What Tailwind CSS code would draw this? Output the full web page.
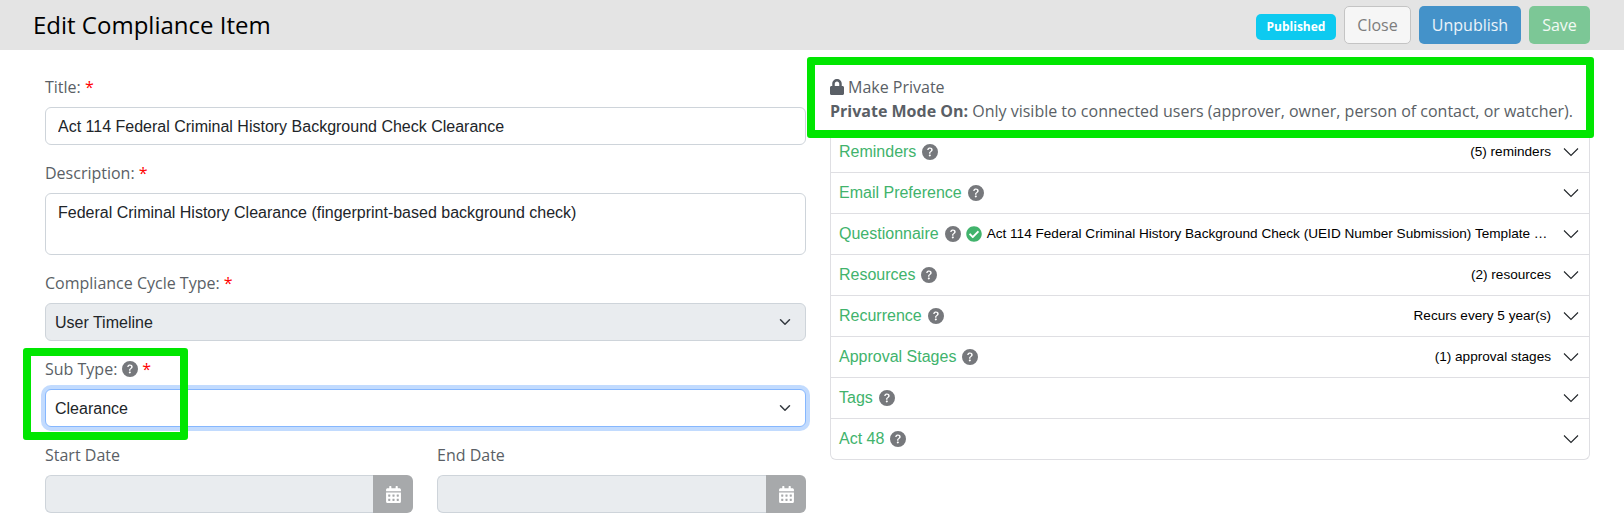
<!DOCTYPE html>
<html lang="en">
<head>
    <meta charset="UTF-8">
    <title>Edit Compliance Item</title>
    <script src="https://cdn.jsdelivr.net/npm/@tailwindcss/browser@4"></script>
</head>
<body class="relative bg-white font-['Open_Sans',sans-serif] text-[16px] text-[#5a5f66] h-[525px] overflow-hidden">
    <svg class="hidden">
        <symbol id="help" viewBox="0 0 16 16"><path fill="currentColor" d="M16 8A8 8 0 1 1 0 8a8 8 0 0 1 16 0M5.496 6.033h.825c.138 0 .248-.113.266-.25.09-.656.54-1.134 1.342-1.134.686 0 1.314.343 1.314 1.168 0 .635-.374.927-.965 1.371-.673.489-1.206 1.06-1.168 1.987l.003.217a.25.25 0 0 0 .25.246h.811a.25.25 0 0 0 .25-.25v-.105c0-.718.273-.927 1.01-1.486.609-.463 1.244-.977 1.244-2.056 0-1.511-1.276-2.241-2.673-2.241-1.267 0-2.655.59-2.75 2.286a.237.237 0 0 0 .241.247m2.325 6.443c.61 0 1.029-.394 1.029-.927 0-.552-.42-.94-1.029-.94-.584 0-1.009.388-1.009.94 0 .533.425.927 1.01.927z"/></symbol>
        <symbol id="calendar" viewBox="0 0 448 512"><path fill="currentColor" d="M0 464c0 26.5 21.5 48 48 48h352c26.5 0 48-21.5 48-48V192H0v272zm320-196c0-6.6 5.4-12 12-12h40c6.6 0 12 5.4 12 12v40c0 6.6-5.4 12-12 12h-40c-6.6 0-12-5.4-12-12v-40zm0 128c0-6.6 5.4-12 12-12h40c6.6 0 12 5.4 12 12v40c0 6.6-5.4 12-12 12h-40c-6.6 0-12-5.4-12-12v-40zM192 268c0-6.6 5.4-12 12-12h40c6.6 0 12 5.4 12 12v40c0 6.6-5.4 12-12 12h-40c-6.6 0-12-5.4-12-12v-40zm0 128c0-6.6 5.4-12 12-12h40c6.6 0 12 5.4 12 12v40c0 6.6-5.4 12-12 12h-40c-6.6 0-12-5.4-12-12v-40zM64 268c0-6.6 5.4-12 12-12h40c6.6 0 12 5.4 12 12v40c0 6.6-5.4 12-12 12H76c-6.6 0-12-5.4-12-12v-40zm0 128c0-6.6 5.4-12 12-12h40c6.6 0 12 5.4 12 12v40c0 6.6-5.4 12-12 12H76c-6.6 0-12-5.4-12-12v-40zM400 64h-48V16c0-8.8-7.2-16-16-16h-32c-8.8 0-16 7.2-16 16v48H160V16c0-8.8-7.2-16-16-16h-32c-8.8 0-16 7.2-16 16v48H48C21.5 64 0 85.5 0 112v48h448v-48c0-26.5-21.5-48-48-48z"/></symbol>
        <symbol id="chevron" viewBox="0 0 16 16"><path fill="none" stroke="currentColor" stroke-width="1.1" d="M1 4.5l7 7 7-7"/></symbol>
        <symbol id="caret" viewBox="0 0 16 16"><path fill="none" stroke="currentColor" stroke-width="2" stroke-linecap="round" stroke-linejoin="round" d="M2 5l6 6 6-6"/></symbol>
        <symbol id="lock" viewBox="0 0 448 512"><path fill="currentColor" d="M400 224h-24v-72C376 68.2 307.8 0 224 0S72 68.2 72 152v72H48c-26.5 0-48 21.5-48 48v192c0 26.5 21.5 48 48 48h352c26.5 0 48-21.5 48-48V272c0-26.5-21.5-48-48-48zm-104 0H152v-72c0-39.7 32.3-72 72-72s72 32.3 72 72v72z"/></symbol>
    </svg>

    <!-- Header -->
    <header class="h-[50px] bg-[#e4e4e4] flex items-center justify-between pl-[33px] pr-[34px]">
        <h1 class="text-[24px] text-black">Edit Compliance Item</h1>
        <div class="flex items-center">
            <span class="h-[26px] w-[80px] mt-[4px] rounded-[5px] bg-[#0dcaf0] text-white text-[12px] font-bold flex items-center justify-center">Published</span>
            <button class="ml-[8px] h-[38px] w-[67px] rounded-[5px] border border-[#c4c4c4] bg-[#f6f6f6] text-[#7d7d7d] text-[16px]">Close</button>
            <button class="ml-[8px] h-[38px] w-[102px] rounded-[5px] bg-[#4492c9] text-white/90 text-[16px]">Unpublish</button>
            <button class="ml-[8px] h-[38px] w-[61px] rounded-[5px] bg-[#7cc796] text-white/90 text-[16px]">Save</button>
        </div>
    </header>

    <main class="flex pl-[45px]">
        <!-- Form -->
        <form class="w-[761px] pt-[25px]">
            <label class="block h-[24px] leading-[24px]">Title: <span class="text-[#ff0000]">*</span></label>
            <input type="text" value="Act 114 Federal Criminal History Background Check Clearance" class="block mt-[8px] w-full h-[38px] px-[12px] pt-[2px] rounded-[6px] border border-[#ced4da] bg-white font-['Liberation_Sans',sans-serif] text-[16px] text-[#212529]">

            <label class="block mt-[16px] h-[24px] leading-[24px]">Description: <span class="text-[#ff0000]">*</span></label>
            <textarea rows="2" class="block mt-[8px] w-full h-[62px] px-[12px] py-[7px] rounded-[6px] border border-[#ced4da] bg-white font-['Liberation_Sans',sans-serif] text-[16px] leading-[24px] text-[#212529] resize-none">Federal Criminal History Clearance (fingerprint-based background check)</textarea>

            <label class="block mt-[16px] h-[24px] leading-[24px]">Compliance Cycle Type: <span class="text-[#ff0000]">*</span></label>
            <div class="relative mt-[8px]">
                <select class="block appearance-none w-full h-[38px] pl-[9px] pt-[1px] rounded-[6px] border border-[#ced4da] bg-[#e9ecef] font-['Liberation_Sans',sans-serif] text-[16px] text-[#212529]"><option>User Timeline</option></select>
                <svg class="absolute right-[15px] top-[13px] w-[12px] h-[12px] text-[#343a40]"><use href="#caret"/></svg>
            </div>

            <label class="flex items-center mt-[16px] h-[24px]">Sub Type:<svg class="ml-[5px] w-[16px] h-[16px] text-[#76787c]"><use href="#help"/></svg><span class="ml-[4px] text-[#ff0000]">*</span></label>
            <div class="relative mt-[8px]">
                <select class="block appearance-none w-full h-[38px] pl-[9px] pt-[1px] rounded-[6px] border border-[#86b7fe] ring-4 ring-[#0d6efd]/25 bg-white font-['Liberation_Sans',sans-serif] text-[16px] text-[#212529]"><option>Clearance</option></select>
                <svg class="absolute right-[15px] top-[13px] w-[12px] h-[12px] text-[#343a40]"><use href="#caret"/></svg>
            </div>

            <div class="grid grid-cols-[368px_369px] gap-[24px] mt-[16px]">
                <div>
                    <label class="block h-[24px] leading-[24px]">Start Date</label>
                    <div class="flex mt-[8px] h-[38px]">
                        <input type="text" disabled class="flex-1 min-w-0 rounded-l-[6px] border border-r-0 border-[#ced4da] bg-[#e9ecef]">
                        <span class="w-[40px] rounded-r-[6px] bg-[#a7a9ab] flex items-center justify-center"><svg class="w-[15px] h-[17px] text-white"><use href="#calendar"/></svg></span>
                    </div>
                </div>
                <div>
                    <label class="block h-[24px] leading-[24px]">End Date</label>
                    <div class="flex mt-[8px] h-[38px]">
                        <input type="text" disabled class="flex-1 min-w-0 rounded-l-[6px] border border-r-0 border-[#ced4da] bg-[#e9ecef]">
                        <span class="w-[40px] rounded-r-[6px] bg-[#a7a9ab] flex items-center justify-center"><svg class="w-[15px] h-[17px] text-white"><use href="#calendar"/></svg></span>
                    </div>
                </div>
            </div>
        </form>

        <!-- Right column -->
        <section class="ml-[24px] w-[760px]">
            <div class="h-[82px] pt-[25px]">
                <div class="flex items-center h-[24px]"><svg class="w-[14px] h-[16px] mr-[4px] text-[#5a5f66]"><use href="#lock"/></svg>Make Private</div>
                <p class="h-[24px] leading-[24px] whitespace-nowrap"><b class="font-bold">Private Mode On:</b> Only visible to connected users (approver, owner, person of contact, or watcher).</p>
            </div>
            <div class="border border-t-0 border-[#dfdfe3] rounded-b-[6px] text-[#41b36c] font-['Liberation_Sans',sans-serif] text-[16px] leading-[24px]">
                <div class="flex items-center h-[41px] pl-[8px] pr-[10px] border-b border-[#dfdfe3]">Reminders<svg class="ml-[6px] w-[16px] h-[16px] text-[#76787c]"><use href="#help"/></svg><span class="ml-auto text-[13.6px] text-black">(5) reminders</span><svg class="ml-[12px] w-[16px] h-[16px] text-[#212529]"><use href="#chevron"/></svg></div>
                <div class="flex items-center h-[41px] pl-[8px] pr-[10px] border-b border-[#dfdfe3]">Email Preference<svg class="ml-[6px] w-[16px] h-[16px] text-[#76787c]"><use href="#help"/></svg><svg class="ml-auto w-[16px] h-[16px] text-[#212529]"><use href="#chevron"/></svg></div>
                <div class="flex items-center h-[41px] pl-[8px] pr-[10px] border-b border-[#dfdfe3]">Questionnaire<svg class="ml-[6px] w-[16px] h-[16px] text-[#76787c]"><use href="#help"/></svg><svg class="ml-[5px] w-[16px] h-[16px] text-[#41b36c]" viewBox="0 0 512 512"><path fill="currentColor" d="M504 256c0 136.967-111.033 248-248 248S8 392.967 8 256 119.033 8 256 8s248 111.033 248 248zM227.314 387.314l184-184c6.248-6.248 6.248-16.379 0-22.627l-22.627-22.627c-6.248-6.249-16.379-6.249-22.628 0L216 308.118l-70.059-70.059c-6.248-6.248-16.379-6.248-22.628 0l-22.627 22.627c-6.248 6.248-6.248 16.379 0 22.627l104 104c6.249 6.25 16.379 6.25 22.628.001z"/></svg><span class="ml-[5px] whitespace-nowrap text-[13.6px] text-black">Act 114 Federal Criminal History Background Check (UEID Number Submission) Template …</span><svg class="ml-auto w-[16px] h-[16px] text-[#212529]"><use href="#chevron"/></svg></div>
                <div class="flex items-center h-[41px] pl-[8px] pr-[10px] border-b border-[#dfdfe3]">Resources<svg class="ml-[6px] w-[16px] h-[16px] text-[#76787c]"><use href="#help"/></svg><span class="ml-auto text-[13.6px] text-black">(2) resources</span><svg class="ml-[12px] w-[16px] h-[16px] text-[#212529]"><use href="#chevron"/></svg></div>
                <div class="flex items-center h-[41px] pl-[8px] pr-[10px] border-b border-[#dfdfe3]">Recurrence<svg class="ml-[6px] w-[16px] h-[16px] text-[#76787c]"><use href="#help"/></svg><span class="ml-auto text-[13.6px] text-black">Recurs every 5 year(s)</span><svg class="ml-[12px] w-[16px] h-[16px] text-[#212529]"><use href="#chevron"/></svg></div>
                <div class="flex items-center h-[41px] pl-[8px] pr-[10px] border-b border-[#dfdfe3]">Approval Stages<svg class="ml-[6px] w-[16px] h-[16px] text-[#76787c]"><use href="#help"/></svg><span class="ml-auto text-[13.6px] text-black">(1) approval stages</span><svg class="ml-[12px] w-[16px] h-[16px] text-[#212529]"><use href="#chevron"/></svg></div>
                <div class="flex items-center h-[41px] pl-[8px] pr-[10px] border-b border-[#dfdfe3]">Tags<svg class="ml-[6px] w-[16px] h-[16px] text-[#76787c]"><use href="#help"/></svg><svg class="ml-auto w-[16px] h-[16px] text-[#212529]"><use href="#chevron"/></svg></div>
                <div class="flex items-center h-[40px] pl-[8px] pr-[10px]">Act 48<svg class="ml-[6px] w-[16px] h-[16px] text-[#76787c]"><use href="#help"/></svg><svg class="ml-auto w-[16px] h-[16px] text-[#212529]"><use href="#chevron"/></svg></div>
            </div>
        </section>
    </main>

    <!-- Green highlight boxes drawn over the screenshot -->
    <div class="absolute left-[807px] top-[57px] w-[787px] h-[81px] border-[8px] border-[#00e600] rounded-[3px]"></div>
    <div class="absolute left-[23px] top-[348px] w-[165px] h-[92px] border-[8px] border-[#00e600] rounded-[3px]"></div>
</body>
</html>
